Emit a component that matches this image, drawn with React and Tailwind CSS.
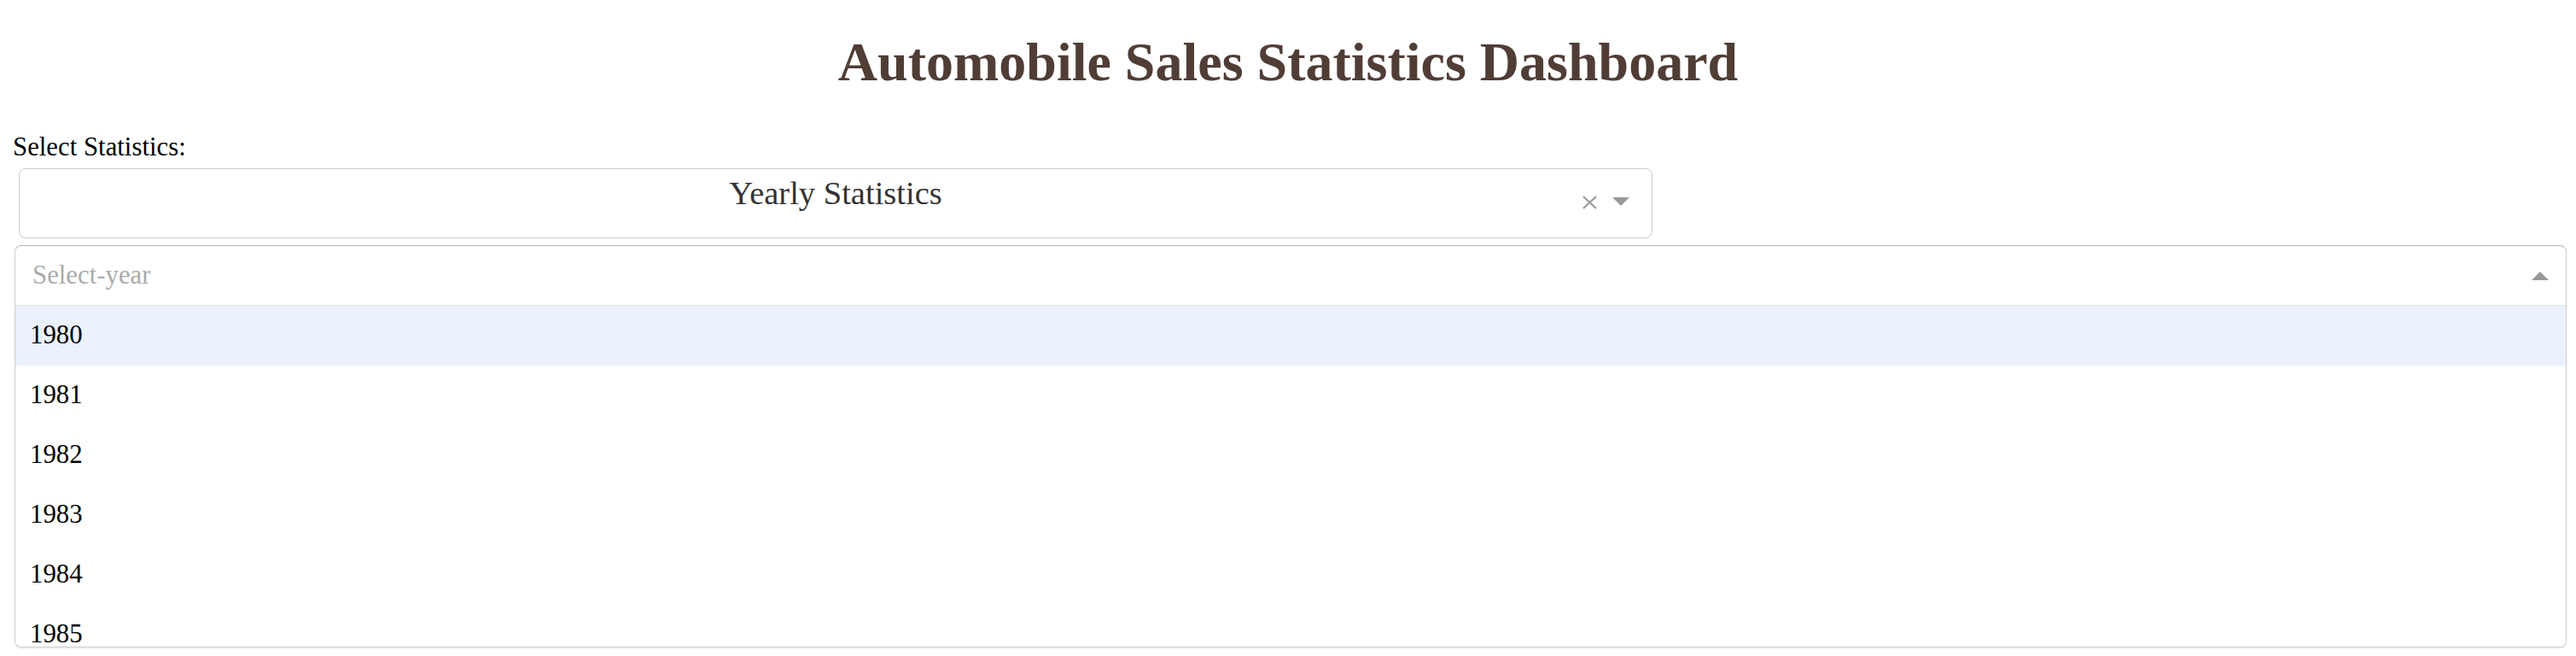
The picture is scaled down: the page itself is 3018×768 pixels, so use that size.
import React from "react";

// only the options the open menu shows
const years = [1980, 1981, 1982, 1983, 1984, 1985];

const App = () => {
  return (
    <div className="min-h-screen bg-white font-['Liberation_Serif','Times_New_Roman',serif]">
      <h1 className="pt-[41px] text-center text-[64px] leading-none font-bold text-[#503D36]">
        Automobile Sales Statistics Dashboard
      </h1>

      <div className="mt-[52px] pl-[15px] text-[30.8px] leading-none text-black">
        Select Statistics:
      </div>

      {/* statistics dropdown */}
      <div className="relative mt-[9px] ml-[22px] h-[82px] w-[1914px] rounded-[8px] border border-[#ccc] bg-white">
        <div className="pt-[9px] text-center text-[38.5px] leading-none text-[#333]">
          Yearly Statistics
        </div>
        <svg
          className="absolute right-[63px] top-[31px]"
          width="19"
          height="16"
          viewBox="0 0 19 16"
        >
          <path d="M2 1 L17 15 M17 1 L2 15" stroke="#999" strokeWidth="2.2" />
        </svg>
        <svg
          className="absolute right-[26px] top-[33px]"
          width="20"
          height="10"
          viewBox="0 0 20 10"
        >
          <polygon points="0,0 20,0 10,10" fill="#999" />
        </svg>
      </div>

      {/* year dropdown, open */}
      <div className="mt-[8px] ml-[17px] w-[2990px]">
        <div className="flex h-[70px] items-center justify-between rounded-t-[8px] border border-b-0 border-[#ccc] border-t-[#b3b3b3] bg-white pl-[20px] pr-[20px]">
          <span className="text-[30.8px] leading-none text-[#aaa]">
            Select-year
          </span>
          <svg width="20" height="10" viewBox="0 0 20 10" className="mt-[2px]">
            <polygon points="0,10 20,10 10,0" fill="#999" />
          </svg>
        </div>
        <div className="h-[401px] overflow-hidden rounded-b-[8px] border border-[#ccc] border-t-[#e6e6e6] bg-white shadow-[0_2px_0_rgba(0,0,0,0.06)]">
          {years.map((year, i) => (
            <div
              key={year}
              className={
                i === 0
                  ? "flex h-[70px] items-center bg-[#EBF1FD] pl-[17px] text-[30.8px] leading-none text-black"
                  : "flex h-[70px] items-center bg-white pl-[17px] text-[30.8px] leading-none text-black"
              }
            >
              {year}
            </div>
          ))}
        </div>
      </div>
    </div>
  );
};

export default App;
